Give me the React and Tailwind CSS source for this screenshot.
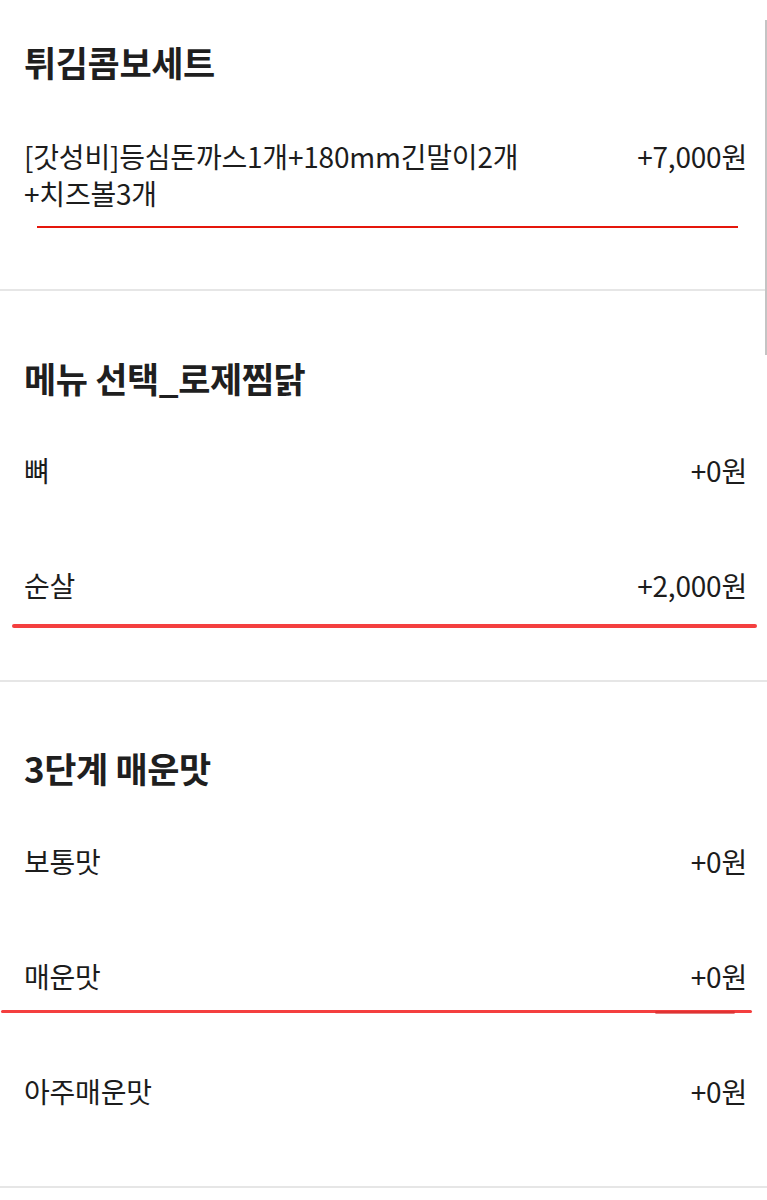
import React from "react";

const font = { fontFamily: '"Noto Sans CJK KR", "Noto Sans", sans-serif' };

function Row({ name, price, tall }) {
  return (
    <div
      className={`flex items-start justify-between gap-6 text-[28px] tracking-[-0.2px] text-[#1c1c1c] ${
        tall ? "pt-[38px] pb-[38px] leading-[37px]" : "py-[40px] leading-[35px]"
      }`}
    >
      <div className="min-w-0">{name}</div>
      <div className="shrink-0">{price}</div>
    </div>
  );
}

function Heading({ children }) {
  return (
    <h2 className="text-[35px] font-bold leading-[40px] tracking-[-0.4px] text-[#1f1f1f]">
      {children}
    </h2>
  );
}

export default function App() {
  return (
    <div className="relative flex flex-col w-[767px] h-[1200px] overflow-hidden bg-white" style={font}>
      <section className="flex flex-col pl-6 pr-5 pt-[42px] pb-[39px] border-b-2 border-[#e6e6e6]">
        <Heading>튀김콤보세트</Heading>
        <div className="mt-[18px] flex flex-col">
          <Row
            tall
            name={
              <>
                [갓성비]등심돈까스1개+180mm긴말이2개
                <br />
                +치즈볼3개
              </>
            }
            price="+7,000원"
          />
        </div>
      </section>

      <section className="flex flex-col pl-6 pr-5 pt-[67px] pb-[37px] border-b-2 border-[#e6e6e6]">
        <Heading>메뉴 선택_로제찜닭</Heading>
        <div className="mt-[15px] flex flex-col">
          <Row name="뼈" price="+0원" />
          <Row name="순살" price="+2,000원" />
        </div>
      </section>

      <section className="flex flex-col pl-6 pr-5 pt-[66px] pb-[37px] border-b-2 border-[#e6e6e6]">
        <Heading>3단계 매운맛</Heading>
        <div className="mt-[16px] flex flex-col">
          <Row name="보통맛" price="+0원" />
          <Row name="매운맛" price="+0원" />
          <Row name="아주매운맛" price="+0원" />
        </div>
      </section>

      {/* annotation underlines drawn over the content */}
      <div className="absolute left-[37px] top-[226px] w-[701px] h-[2px] bg-[#e5170c]" />
      <div className="absolute left-[12px] top-[624px] w-[745px] h-[4px] rounded-full bg-[#f43f3f]" />
      <div className="absolute left-[1px] top-[1010px] w-[751px] h-[3px] rounded-full bg-[#f43f3f]" />
      <div className="absolute left-[655px] top-[1011px] w-[80px] h-[3px] rounded-full bg-[#d42a2a] opacity-60" />

      {/* scrollbar */}
      <div className="absolute right-0 top-[20px] w-[2px] h-[335px] bg-[#c4c4c4]" />
    </div>
  );
}
